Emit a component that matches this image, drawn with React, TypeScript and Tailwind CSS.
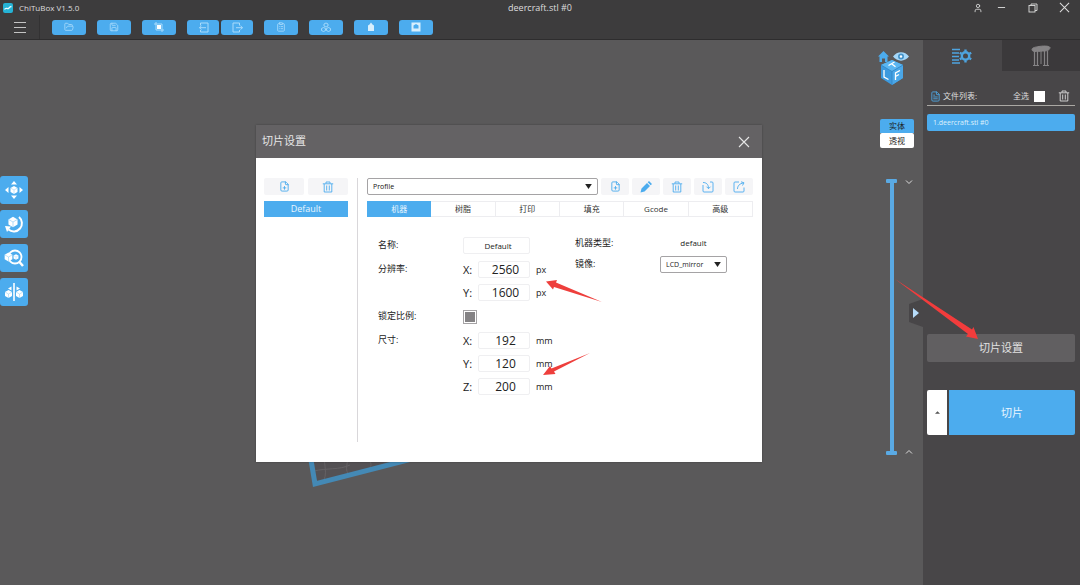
import type { ReactNode } from "react";
import {
  ClipboardList,
  FilePlus,
  FileText,
  FolderOpen,
  Minus,
  Save,
  User,
} from "lucide-react";

const FONT = "font-['Open_Sans','Noto_Sans_CJK_SC',sans-serif]";

const ToolButton = ({ label, wide = true, children }: { label: string; wide?: boolean; children: ReactNode }) => (
  <button
    aria-label={label}
    className={`${wide ? "w-[34px]" : "w-8"} h-[15px] flex items-center justify-center rounded-[3px] bg-[#4cacee] text-[#a9dbfb]`}
  >
    {children}
  </button>
);

const RailButton = ({ label, children }: { label: string; children: ReactNode }) => (
  <button aria-label={label} className="size-7 flex items-center justify-center rounded-[3px] bg-[#4cacee] text-white">
    <svg viewBox="0 0 20 20" className="size-5" fill="currentColor">
      {children}
    </svg>
  </button>
);

const IconButton = ({ label, className, children }: { label: string; className: string; children: ReactNode }) => (
  <button
    aria-label={label}
    className={`${className} h-[17px] flex items-center justify-center rounded-[2px] bg-[#f5f5f7] text-[#4cacee]`}
  >
    {children}
  </button>
);

const Caret = () => (
  <svg viewBox="0 0 8 6" className="absolute right-[6px] top-[6px] w-[7px] h-[5px] pointer-events-none">
    <path d="M0 0h8L4 6z" fill="#222" />
  </svg>
);

const TrashIcon = () => (
  <svg viewBox="0 0 12 12" className="size-3" fill="none" stroke="currentColor" strokeWidth=".9">
    <path d="M.8 2.800h10.400M4 2.500V1h4v1.500M2.200 3v8h7.600V3M4.700 4.500v5M7.300 4.500v5" />
  </svg>
);

const CloseIcon = ({ className }: { className: string }) => (
  <svg viewBox="0 0 12 12" className={className} stroke="currentColor" strokeWidth="1.100">
    <path d="M1 1l10 10M11 1 1 11" />
  </svg>
);

const CubeMini = ({ x, y, s = 1 }: { x: number; y: number; s?: number }) => (
  <g transform={`translate(${x} ${y}) scale(${s})`}>
    <path d="M0-4 3.500-2v4L0 4-3.500 2v-4z" fill="#fff" />
    <path d="M-3.500-2 0 0l3.500-2M0 0v4" fill="none" stroke="#8ccbf5" strokeWidth=".5" />
  </g>
);

const TitleBar = () => (
  <div className="h-[15px] relative flex items-center justify-between pl-[3px] pr-[10px]">
    <div className="flex items-center gap-[6px]">
      <svg viewBox="0 0 10 10" className="size-[10px]">
        <rect width="10" height="10" rx="2" fill="#25b3d6" />
        <path d="M1.500 6.500C3 3.500 4.500 7 6 5c.8-1.200 1.500-1.500 2.500-1.500" fill="none" stroke="#e8fbff" strokeWidth="1.300" />
      </svg>
      <span className="text-[8px] leading-[14px] text-[#dddddd]">ChiTuBox V1.5.0</span>
    </div>
    <span className="absolute left-1/2 -translate-x-1/2 text-[9px] leading-[14px] text-[#dddddd]">deercraft.stl #0</span>
    <div className="flex items-center text-[#dddddd]">
      <button aria-label="user" className="mr-[13px]"><User size={10} strokeWidth={2} /></button>
      <button aria-label="minimize" className="mr-[21px]"><Minus size={11} strokeWidth={2} /></button>
      <button aria-label="restore" className="mr-[21px]">
        <svg viewBox="0 0 10 10" className="size-[10px]" fill="none" stroke="currentColor" strokeWidth=".9">
          <rect x="1" y="2.500" width="6" height="6.500" />
          <path d="M3 2.500V1h6v6.500H7" />
        </svg>
      </button>
      <button aria-label="close"><CloseIcon className="size-[11px]" /></button>
    </div>
  </div>
);

const Toolbar = () => (
  <div className="h-6 flex items-center">
    <button aria-label="menu" className="w-10 h-full flex items-center justify-center border-r border-[#333233] text-[#c4c4c4]">
      <svg viewBox="0 0 12 12" className="size-3" stroke="currentColor" strokeWidth="1">
        <path d="M0 1.500h12M0 6.500h12M0 11.500h12" />
      </svg>
    </button>
    <div className="flex gap-[11px] ml-3">
      <ToolButton label="open"><FolderOpen size={10} /></ToolButton>
      <ToolButton label="save"><Save size={10} /></ToolButton>
      <ToolButton label="screenshot">
        <svg viewBox="0 0 10 10" className="size-[10px]" fill="none" stroke="currentColor">
          <path d="M2 0v8h8M0 2h8v8" />
          <rect x="3.500" y="3.500" width="3" height="3" fill="#fff" stroke="#fff" />
        </svg>
      </ToolButton>
      <div className="flex gap-[2px]">
        <ToolButton label="undo" wide={false}>
          <svg viewBox="0 0 11 11" className="size-[11px]" fill="none" stroke="currentColor">
            <path d="M2.500 3.500V1H10v9H2.500V8M8 5.700H1.500M3.500 3.800l-2 1.900 2 1.900" />
          </svg>
        </ToolButton>
        <ToolButton label="redo" wide={false}>
          <svg viewBox="0 0 11 11" className="size-[11px]" fill="none" stroke="currentColor">
            <path d="M7.500 3.500V1H1v9h6.500V8M4 5.700h6.500M8.500 3.800l2 1.900-2 1.900" />
          </svg>
        </ToolButton>
      </div>
      <ToolButton label="copy"><ClipboardList size={10} /></ToolButton>
      <ToolButton label="auto layout">
        <svg viewBox="0 0 10 10" className="size-[10px]" fill="none" stroke="currentColor" strokeWidth=".9">
          <path d="M5 1l2 1v2L5 5 3 4V2zM2.500 5.500l2 1v2l-2 1-2-1v-2zM7.500 5.500l2 1v2l-2 1-2-1v-2z" />
        </svg>
      </ToolButton>
      <ToolButton label="hollow">
        <svg viewBox="0 0 10 10" className="size-[10px]" fill="#d8effd">
          <path d="M5 .5 6.500 2.500 8 3.500V9H2V3.500l1.500-1z" />
        </svg>
      </ToolButton>
      <ToolButton label="dig hole">
        <svg viewBox="0 0 10 10" className="size-[10px]">
          <rect x=".5" y=".5" width="9" height="9" fill="#d8effd" />
          <path d="M2.500 3.500 5 2l2.500 1.500v3H2.500z" fill="#4cacee" />
        </svg>
      </ToolButton>
    </div>
  </div>
);

const LeftRail = () => (
  <div className="flex flex-col gap-[6px] pt-[136px]">
    <RailButton label="move">
      <path d="M10 1l3 3.500H7zM10 19l3-3.500H7zM1 10l3.500-3v6zM19 10l-3.500-3v6z" />
      <CubeMini x={10} y={10} />
    </RailButton>
    <RailButton label="rotate">
      <path d="M15 3a8 8 0 0 1-10.500 12.500" fill="none" stroke="#fff" strokeWidth="2" />
      <path d="M1 12l6 .5L3 18z" />
      <CubeMini x={9} y={8} s={1.3} />
    </RailButton>
    <RailButton label="scale">
      <circle cx="11" cy="9" r="6.500" fill="none" stroke="#fff" strokeWidth="1.800" />
      <path d="M15 13.500l4 4.500" stroke="#fff" strokeWidth="2.500" />
      <CubeMini x={4.5} y={9} s={1.1} />
      <CubeMini x={12} y={9} s={0.7} />
    </RailButton>
    <RailButton label="mirror">
      <path d="M9.200 1h1.600v18H9.200zM4 6.500l3.500-2v4zM16 6.500l-3.500-2v4z" />
      <CubeMini x={4.5} y={12} />
      <CubeMini x={15.5} y={12} />
    </RailButton>
  </div>
);

const ViewControls = () => (
  <div className="w-[45px] relative flex flex-col">
    <svg viewBox="0 0 32 36" className="mt-[10px] w-8 h-9" fill="#4cacee">
      <path d="M5.500 1 11 6.500H9.500V12H7V8.500H4V12H1.500V6.500H0z" />
      <path d="M15 6.500C19 .8 27 .8 31 6.500 27 12 19 12 15 6.500z" fill="#a5d8fa" />
      <circle cx="23" cy="6.500" r="3" fill="#4593c8" />
      <circle cx="23" cy="6.500" r="1.200" fill="#fff" />
      <path d="M14 10l11 5v13l-11 7-11-7V15z" fill="#3d9ade" />
      <path d="M14 10l11 5-11 6.500L3 15z" fill="#5ab6f2" />
      <path d="M14 21.500V35l11-7V15z" fill="#4aa7e8" />
      <path d="M3 15l11 6.500L25 15M14 21.500V35" fill="none" stroke="#2f7fbd" strokeWidth=".7" />
      <path d="M10.500 15.500l6-3.500M13.500 13.700l4 3M6 20v7l4.500 2.500M17.500 30v-7l4.500-2.500M17.500 26.500l3.500-2" fill="none" stroke="#fff" strokeWidth="1.300" />
    </svg>
    <div className="flex flex-col w-[34px] ml-[2px] mt-[33px] text-[8px] leading-[15px] text-[#1d1d1d]">
      <button className="h-[14px] leading-[14px] rounded-t-[2px] bg-[#4cacee]">实体</button>
      <button className="h-[15px] rounded-[2px] bg-white">透视</button>
    </div>
    <div className="mt-[31px] ml-2 flex gap-2">
      <div className="w-[11px] flex flex-col items-center">
        <span className="w-full h-1 rounded-[1px] bg-[#5aaae4]" />
        <input
          type="range"
          aria-label="layer"
          className="appearance-none w-[4px] h-[268px] bg-[#5aaae4] [writing-mode:vertical-lr] [&::-webkit-slider-thumb]:appearance-none [&::-webkit-slider-thumb]:size-0"
        />
        <span className="w-full h-1 rounded-[1px] bg-[#5aaae4]" />
      </div>
      <div className="flex flex-col justify-between text-[#dcdcdc]">
        <button aria-label="layer down">
          <svg viewBox="0 0 8 6" className="w-2 h-[6px]" fill="none" stroke="currentColor"><path d="M1 1.500l3 3 3-3" /></svg>
        </button>
        <button aria-label="layer up">
          <svg viewBox="0 0 8 6" className="w-2 h-[6px]" fill="none" stroke="currentColor"><path d="M1 4.500l3-3 3 3" /></svg>
        </button>
      </div>
    </div>
    <button aria-label="collapse panel" className="absolute right-0 top-[259px]">
      <svg viewBox="0 0 15 28" className="w-[15px] h-7">
        <path d="M15 0v28L1 23V5z" fill="#484648" />
        <path d="M5 9v10l6-5z" fill="#b7dcfa" />
      </svg>
    </button>
  </div>
);

const SidePanel = () => (
  <aside className="w-[157px] relative bg-[#484648]">
    <div className="grid grid-cols-2 h-[31px]">
      <button aria-label="slice settings" className="flex items-center justify-center">
        <svg viewBox="0 0 20 16" className="w-5 h-4" fill="none" stroke="#4ea4df">
          <path d="M0 1.500h8M0 5h7M0 8.500h7M0 12h7M0 15h8" strokeWidth="1.300" />
          <circle cx="13.500" cy="8" r="3.700" strokeWidth="2.400" />
          <path d="M13.500 1.500v2M13.500 12.500v2M7.800 4.800l1.800 1M17.400 10.200l1.800 1M19.200 4.800l-1.800 1M9.600 10.200l-1.800 1" strokeWidth="2.400" />
        </svg>
      </button>
      <button aria-label="supports" className="flex items-center justify-center bg-[#3b393b]">
        <svg viewBox="0 0 20 22" className="w-5 h-[22px]" fill="none" stroke="#858385">
          <path d="M1 4.500C1 2.500 5 2 8 1.500s10-1 11 1c0 2.500-3 3.500-6 3.500-4 0-12 2-12-1.500z" fill="#858385" />
          <path d="M3.500 6v14M6.500 6v14M13.500 6v14M16.500 6v14" strokeWidth="1.200" />
          <path d="M10 5v14M2 20.500h6M12 20.500h6" />
        </svg>
      </button>
    </div>
    <div className="pl-1 pr-[5px]">
      <div className="h-[35px] flex items-end border-b border-[#aaa8a3] pb-[3px] pl-[3px] pr-[5px] text-[8px] leading-[12px] text-[#dedede]">
        <FileText size={11} className="text-[#4ea4df] mr-[2px]" />
        <span>文件列表:</span>
        <label className="ml-auto flex items-center gap-[5px]">
          全选
          <input type="checkbox" className="appearance-none size-[11px] bg-white" />
        </label>
        <button aria-label="delete file" className="ml-[13px]">
          <TrashIcon />
        </button>
      </div>
      <ul className="h-[228px] pt-2">
        <li className="h-[17px] rounded-[2px] bg-[#4cacee] px-[6px] text-[7px] leading-[17px] text-[#dff1fd]">1.deercraft.stl #0</li>
      </ul>
      <button className="w-full h-7 rounded-[2px] bg-[#615f61] text-[11px] text-[#e2e2e2]">切片设置</button>
      <div className="mt-7 flex gap-[2px] h-[45px]">
        <button aria-label="more" className="w-5 flex items-center justify-center rounded-l-[2px] bg-white">
          <svg viewBox="0 0 6 3" className="w-[5px] h-[3px]"><path d="M0 3l3-3 3 3z" fill="#555" /></svg>
        </button>
        <button className="flex-1 rounded-r-[2px] bg-[#4cacee] text-[11px] text-[#e9f6ff]">切片</button>
      </div>
    </div>
    <svg viewBox="0 0 86 64" className="absolute -left-7 top-[239px] w-[86px] h-16 pointer-events-none">
      <path d="M0 0 77 50.500l1.500-2.500L83 60 71 57.500l2-2.500z" fill="#f23c3c" />
    </svg>
  </aside>
);

const TABS = ["机器", "树脂", "打印", "填充", "Gcode", "高级"];

const NumberRow = ({ axis, value, unit }: { axis: string; value: string; unit: string }) => (
  <label className="flex items-center h-[17px]">
    <span className="w-[15px] text-[11px]">{axis}:</span>
    <input
      defaultValue={value}
      className="w-[52px] h-[17px] rounded-[2px] border border-[#efeff1] bg-white pl-[3px] text-center text-[12px] leading-[15px]"
    />
    <span className="ml-[6px] text-[9px]">{unit}</span>
  </label>
);

const MachineForm = () => (
  <div className="flex justify-between mt-5 pl-[11px] pr-[26px] text-[9px] leading-[15px] text-[#222]">
    <div className="grid grid-cols-[85px_auto] gap-y-[7px]">
      <label htmlFor="machine-name">名称:</label>
      <input
        id="machine-name"
        defaultValue="Default"
        className="w-[67px] h-[17px] rounded-[2px] border border-[#efeff1] bg-white pl-[3px] text-center text-[8px]"
      />
      <span>分辨率:</span>
      <div className="flex flex-col gap-[6px]">
        <NumberRow axis="X" value="2560" unit="px" />
        <NumberRow axis="Y" value="1600" unit="px" />
      </div>
      <label htmlFor="lock-ratio">锁定比例:</label>
      <div className="h-[17px] flex items-center">
        <input
          id="lock-ratio"
          type="checkbox"
          defaultChecked
          className="appearance-none size-[14px] border border-[#a5a3a5] bg-white checked:bg-[#848284] checked:shadow-[inset_0_0_0_1px_#fff]"
        />
      </div>
      <span>尺寸:</span>
      <div className="flex flex-col gap-[6px]">
        <NumberRow axis="X" value="192" unit="mm" />
        <NumberRow axis="Y" value="120" unit="mm" />
        <NumberRow axis="Z" value="200" unit="mm" />
      </div>
    </div>
    <div className="grid grid-cols-[85px_auto] gap-y-1 content-start -mt-[2px]">
      <span>机器类型:</span>
      <span className="h-[17px] text-center text-[8px]">default</span>
      <label htmlFor="mirror">镜像:</label>
      <div className="relative">
        <select
          id="mirror"
          className="appearance-none block w-[67px] h-[17px] rounded-[2px] border border-[#a5a3a5] bg-white pl-[5px] text-[7px] leading-[15px]"
        >
          <option>LCD_mirror</option>
        </select>
        <Caret />
      </div>
    </div>
  </div>
);

const SettingsDialog = () => (
  <div role="dialog" aria-label="切片设置" className="absolute left-[256px] top-[85px] w-[506px] bg-white shadow-[0_0_2px_rgba(0,0,0,0.3)]">
    <div className="h-[33px] flex items-center justify-between pl-[6px] pr-3 bg-[#646264] text-[#e6e6e6]">
      <h2 className="text-[11px]">切片设置</h2>
      <button aria-label="close dialog"><CloseIcon className="size-3" /></button>
    </div>
    <div className="flex h-[304px] pt-5 pb-5 pl-2 pr-[9px]">
      <div className="w-[94px] pr-[9px] border-r border-[#d9d7da]">
        <div className="flex justify-between">
          <IconButton label="add machine" className="w-10"><FilePlus size={11} /></IconButton>
          <IconButton label="delete machine" className="w-10"><TrashIcon /></IconButton>
        </div>
        <button className="mt-[6px] w-full h-4 block bg-[#4cacee] text-[9px] leading-4 text-[#eaf6ff]">Default</button>
      </div>
      <div className="flex-1 ml-[9px]">
        <div className="flex gap-[3px]">
          <div className="relative flex-1">
            <select
              aria-label="profile"
              className="appearance-none block w-full h-[17px] rounded-[2px] border border-[#a5a3a5] bg-white pl-[5px] text-[7px] leading-[15px] text-[#111]"
            >
              <option>Profile</option>
            </select>
            <Caret />
          </div>
          <IconButton label="add profile" className="w-7"><FilePlus size={11} /></IconButton>
          <IconButton label="rename profile" className="w-7">
            <svg viewBox="0 0 12 12" className="size-3" fill="currentColor">
              <path d="M.5 11.500l1-4L7 2l3 3-5.500 5.500zM7.700 1.300 9 0l3 3-1.300 1.300z" />
            </svg>
          </IconButton>
          <IconButton label="delete profile" className="w-7"><TrashIcon /></IconButton>
          <IconButton label="import profile" className="w-7">
            <svg viewBox="0 0 12 12" className="size-3" fill="none" stroke="currentColor" strokeWidth=".9">
              <path d="M8 1h2q1 0 1 1v8q0 1-1 1H2q-1 0-1-1V4M1 1.500c3 0 5.500 1.500 5.500 6M4.500 5.700l2 2 2-2" />
            </svg>
          </IconButton>
          <IconButton label="export profile" className="w-7">
            <svg viewBox="0 0 12 12" className="size-3" fill="none" stroke="currentColor" strokeWidth=".9">
              <path d="M6 1H2Q1 1 1 2v8q0 1 1 1h8q1 0 1-1V6.500M4.500 8c0-3 2-5.500 6-6M8 .8l3 1-1.500 2.700" />
            </svg>
          </IconButton>
        </div>
        <div role="tablist" className="mt-[6px] grid grid-cols-6 h-4 text-[8px] leading-4 text-[#333]">
          {TABS.map((tab, i) => (
            <button
              key={tab}
              role="tab"
              aria-selected={i === 0}
              className={i === 0 ? "bg-[#4cacee] text-[#eaf6ff]" : "border-y border-r border-[#ededf0] leading-[14px]"}
            >
              {tab}
            </button>
          ))}
        </div>
        <MachineForm />
      </div>
    </div>
    <svg viewBox="0 0 56 24" className="absolute left-[290px] top-[155px] w-14 h-6 pointer-events-none">
      <path d="M0 1.500 11 0l-1 2.500L56 22 8 7l-1 2.500z" fill="#ee3f3c" />
    </svg>
    <svg viewBox="0 0 50 26" className="absolute left-[286px] top-[227px] w-[50px] h-[26px] pointer-events-none">
      <path d="M1 23 8 14l1.500 2.500L48 1 12 19.500l1.500 2.500z" fill="#ee3f3c" />
    </svg>
  </div>
);

export default function App() {
  return (
    <div className={`${FONT} min-h-screen flex flex-col bg-[#5a595a]`}>
      <header className="h-10 bg-[#3d3c3d] border-b border-[#2e2d2e]">
        <TitleBar />
        <Toolbar />
      </header>
      <main className="relative flex-1 flex">
        <section className="relative flex-1 flex justify-between">
          <LeftRail />
          <svg viewBox="0 0 112 36" className="absolute left-[304px] top-[414px] w-28 h-9">
            <path d="M4 0h104L11 31z" fill="#545154" />
            <path d="M20 26C24 16 18 8 22 0M10 17c12-3 26-1 36-6M44 20c-4-8 2-12-2-20M66 14c3-5-2-8 0-14" fill="none" stroke="#656265" />
            <path d="M6 0l5 30L112 4" fill="none" stroke="#4489b5" strokeWidth="5" />
          </svg>
          <ViewControls />
        </section>
        <SidePanel />
        <SettingsDialog />
      </main>
    </div>
  );
}
